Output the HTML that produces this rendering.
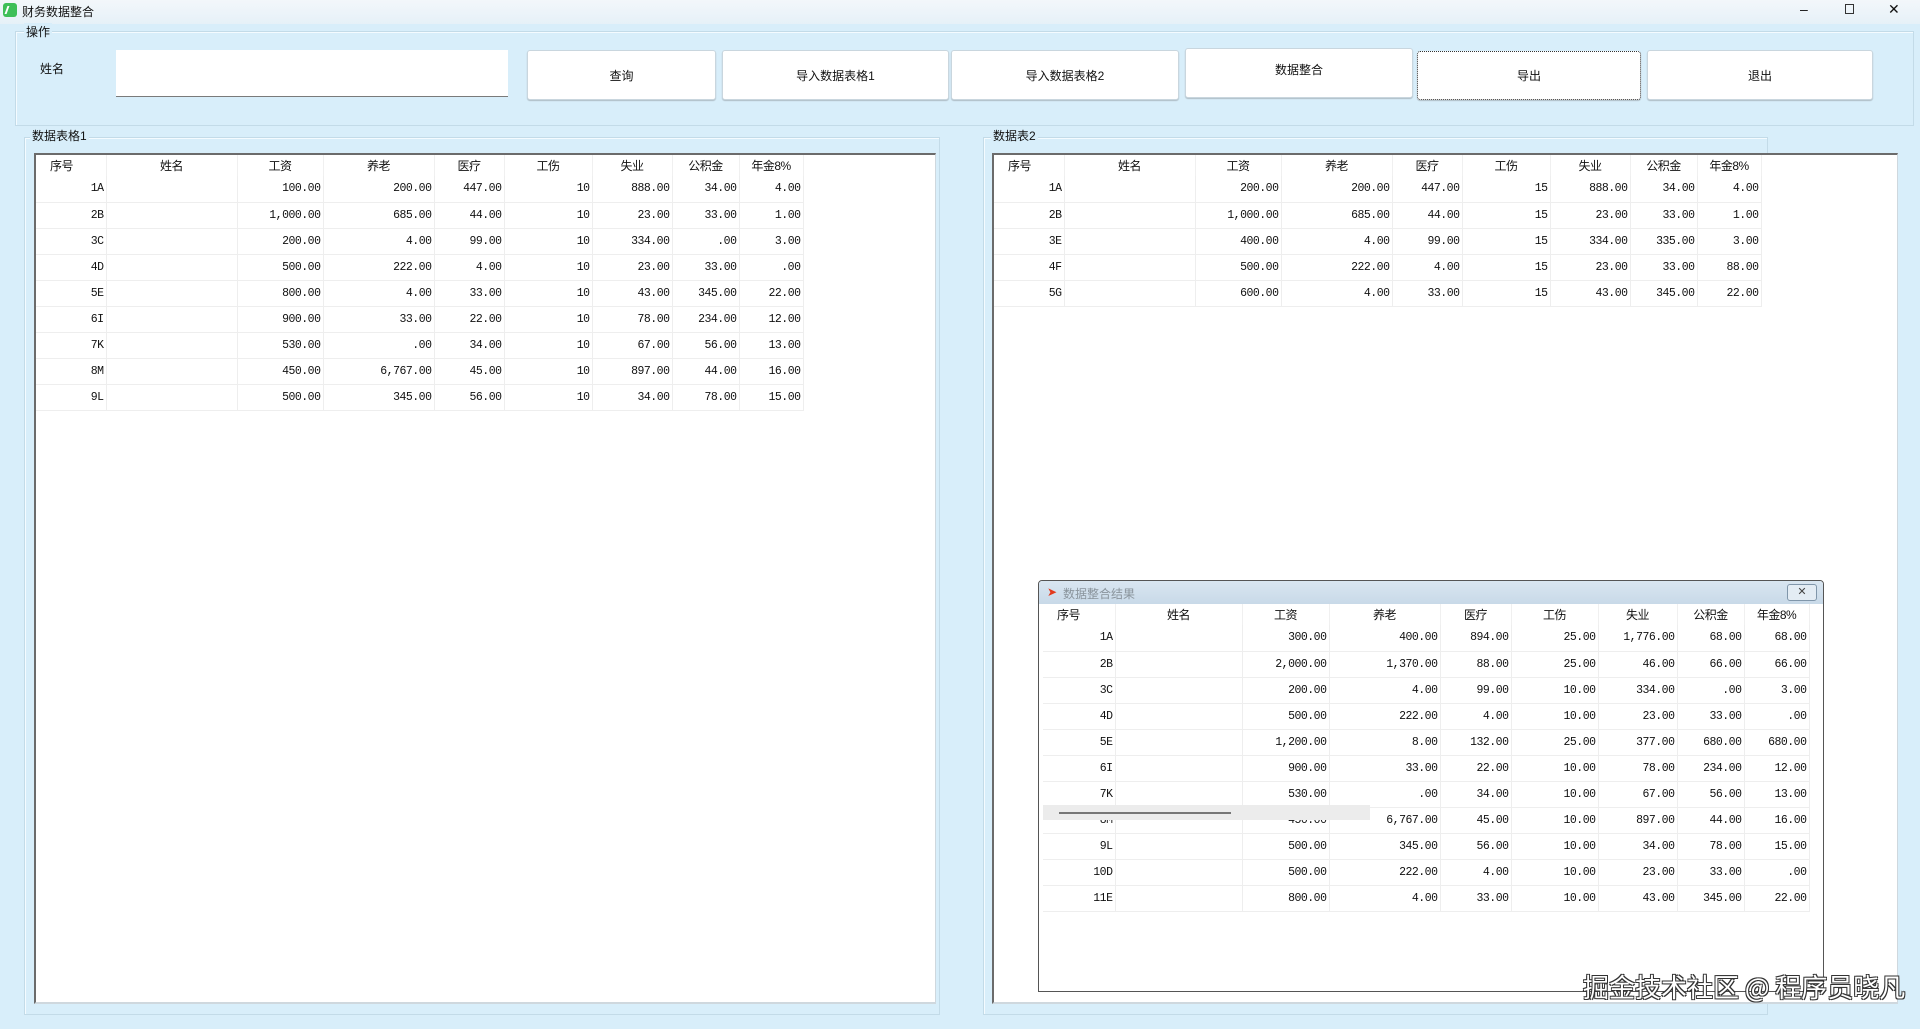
<!DOCTYPE html>
<html><head><meta charset="utf-8">
<style>
*{margin:0;padding:0;box-sizing:border-box}
body{width:1920px;height:1029px;overflow:hidden;background:#d8eefa;font-family:"Liberation Sans","Noto Sans CJK SC",sans-serif;font-size:12px;color:#111;position:relative}
.abs{position:absolute}
#title{left:0;top:0;width:1920px;height:24px;background:linear-gradient(#f3f7fa,#e6f1f8)}
.grp{position:absolute;border:1px solid #c3dbe8;box-shadow:1px 1px 0 #f4fbff inset}
.lbl{position:absolute;background:#d8eefa;padding:0 2px;font-size:12px}
.btn{position:absolute;background:#fff;border:1px solid #c9d6de;border-radius:3px;box-shadow:0 1px 1px #aebcc5;display:flex;align-items:center;justify-content:center;font-size:12px}
.tbl{position:absolute;background:#fff;border-top:2px solid #6b6b6b;border-left:2px solid #6b6b6b;border-right:1px solid #cfd8de;border-bottom:2px solid #cfd8de;overflow:hidden}
table{border-collapse:collapse;table-layout:fixed;font-family:"Liberation Mono","Noto Sans CJK SC",monospace;font-size:11.5px;letter-spacing:-0.5px}
th{font-family:"Liberation Sans","Noto Sans CJK SC",sans-serif;font-weight:normal;height:21px;font-size:12px;border-right:1px solid #f0f0f0;text-align:center}
td{height:26px;text-align:right;padding-right:2px;border-right:1px solid #eeeeee;border-bottom:1px solid #eeeeee;white-space:nowrap}
th:first-child{text-align:left;padding-left:14px}
td:nth-child(2){text-align:left}
</style></head><body>
<div id="title" class="abs"></div>
<div class="abs" style="left:3px;top:3px;width:14px;height:14px;background:#3fbf58;border-radius:3px"></div>
<div class="abs" style="left:6px;top:6px;width:8px;height:8px;border-left:2px solid #fff;transform:skewX(-20deg)"></div>
<div class="abs" style="left:22px;top:3px;font-size:12px">财务数据整合</div>
<div class="abs" style="left:1800px;top:1px;font-size:14px">–</div>
<div class="abs" style="left:1845px;top:4px;width:9px;height:10px;border:1px solid #333"></div>
<div class="abs" style="left:1888px;top:1px;font-size:14px">✕</div>

<div class="grp" style="left:15px;top:31px;width:1899px;height:95px"></div>
<div class="lbl" style="left:24px;top:23px">操作</div>
<div class="abs" style="left:40px;top:60px">姓名</div>
<div class="abs" style="left:116px;top:50px;width:392px;height:47px;background:#fff;border-bottom:1px solid #7a7a7a"></div>
<div class="btn" style="left:527px;top:50px;width:189px;height:50px">查询</div>
<div class="btn" style="left:722px;top:50px;width:227px;height:50px">导入数据表格1</div>
<div class="btn" style="left:951px;top:50px;width:228px;height:50px">导入数据表格2</div>
<div class="btn" style="left:1185px;top:48px;width:228px;height:50px;padding-bottom:8px">数据整合</div>
<div class="btn" style="left:1417px;top:51px;width:224px;height:49px;border:1px dotted #333">导出</div>
<div class="btn" style="left:1647px;top:50px;width:226px;height:50px">退出</div>

<div class="grp" style="left:24px;top:137px;width:916px;height:878px"></div>
<div class="lbl" style="left:30px;top:127px">数据表格1</div>
<div class="tbl" style="left:34px;top:153px;width:902px;height:851px">
<table style="width:767px"><colgroup><col style="width:70px"><col style="width:131px"><col style="width:86px"><col style="width:111px"><col style="width:70px"><col style="width:88px"><col style="width:80px"><col style="width:67px"><col style="width:64px"></colgroup>
<tr><th>序号</th><th>姓名</th><th>工资</th><th>养老</th><th>医疗</th><th>工伤</th><th>失业</th><th>公积金</th><th>年金8%</th></tr>
<tr><td>1A</td><td></td><td>100.00</td><td>200.00</td><td>447.00</td><td>10</td><td>888.00</td><td>34.00</td><td>4.00</td></tr>
<tr><td>2B</td><td></td><td>1,000.00</td><td>685.00</td><td>44.00</td><td>10</td><td>23.00</td><td>33.00</td><td>1.00</td></tr>
<tr><td>3C</td><td></td><td>200.00</td><td>4.00</td><td>99.00</td><td>10</td><td>334.00</td><td>.00</td><td>3.00</td></tr>
<tr><td>4D</td><td></td><td>500.00</td><td>222.00</td><td>4.00</td><td>10</td><td>23.00</td><td>33.00</td><td>.00</td></tr>
<tr><td>5E</td><td></td><td>800.00</td><td>4.00</td><td>33.00</td><td>10</td><td>43.00</td><td>345.00</td><td>22.00</td></tr>
<tr><td>6I</td><td></td><td>900.00</td><td>33.00</td><td>22.00</td><td>10</td><td>78.00</td><td>234.00</td><td>12.00</td></tr>
<tr><td>7K</td><td></td><td>530.00</td><td>.00</td><td>34.00</td><td>10</td><td>67.00</td><td>56.00</td><td>13.00</td></tr>
<tr><td>8M</td><td></td><td>450.00</td><td>6,767.00</td><td>45.00</td><td>10</td><td>897.00</td><td>44.00</td><td>16.00</td></tr>
<tr><td>9L</td><td></td><td>500.00</td><td>345.00</td><td>56.00</td><td>10</td><td>34.00</td><td>78.00</td><td>15.00</td></tr>
</table></div>

<div class="grp" style="left:983px;top:137px;width:785px;height:878px"></div>
<div class="lbl" style="left:991px;top:127px">数据表2</div>
<div class="tbl" style="left:992px;top:153px;width:906px;height:851px">
<table style="width:767px"><colgroup><col style="width:70px"><col style="width:131px"><col style="width:86px"><col style="width:111px"><col style="width:70px"><col style="width:88px"><col style="width:80px"><col style="width:67px"><col style="width:64px"></colgroup>
<tr><th>序号</th><th>姓名</th><th>工资</th><th>养老</th><th>医疗</th><th>工伤</th><th>失业</th><th>公积金</th><th>年金8%</th></tr>
<tr><td>1A</td><td></td><td>200.00</td><td>200.00</td><td>447.00</td><td>15</td><td>888.00</td><td>34.00</td><td>4.00</td></tr>
<tr><td>2B</td><td></td><td>1,000.00</td><td>685.00</td><td>44.00</td><td>15</td><td>23.00</td><td>33.00</td><td>1.00</td></tr>
<tr><td>3E</td><td></td><td>400.00</td><td>4.00</td><td>99.00</td><td>15</td><td>334.00</td><td>335.00</td><td>3.00</td></tr>
<tr><td>4F</td><td></td><td>500.00</td><td>222.00</td><td>4.00</td><td>15</td><td>23.00</td><td>33.00</td><td>88.00</td></tr>
<tr><td>5G</td><td></td><td>600.00</td><td>4.00</td><td>33.00</td><td>15</td><td>43.00</td><td>345.00</td><td>22.00</td></tr>
</table></div>

<div class="abs" style="left:1038px;top:580px;width:786px;height:412px;background:#fff;border:1px solid #555;border-radius:4px 4px 0 0;overflow:hidden">
<div class="abs" style="left:0;top:0;width:786px;height:23px;background:linear-gradient(#d9e6f1,#c8d9e8)"></div>
<div class="abs" style="left:8px;top:4px;color:#e23a1e;font-size:12px">➤</div>
<div class="abs" style="left:24px;top:4px;color:#8a949c;font-size:12px">数据整合结果</div>
<div class="abs" style="left:748px;top:3px;width:30px;height:17px;border:1px solid #8096aa;border-radius:3px;background:#e3ecf4;font-size:11px;text-align:center;line-height:15px;color:#444">✕</div>
<div class="abs" style="left:4px;top:23px">
<table style="width:766px"><colgroup><col style="width:72px"><col style="width:127px"><col style="width:87px"><col style="width:111px"><col style="width:71px"><col style="width:87px"><col style="width:79px"><col style="width:67px"><col style="width:65px"></colgroup>
<tr><th>序号</th><th>姓名</th><th>工资</th><th>养老</th><th>医疗</th><th>工伤</th><th>失业</th><th>公积金</th><th>年金8%</th></tr>
<tr><td>1A</td><td></td><td>300.00</td><td>400.00</td><td>894.00</td><td>25.00</td><td>1,776.00</td><td>68.00</td><td>68.00</td></tr>
<tr><td>2B</td><td></td><td>2,000.00</td><td>1,370.00</td><td>88.00</td><td>25.00</td><td>46.00</td><td>66.00</td><td>66.00</td></tr>
<tr><td>3C</td><td></td><td>200.00</td><td>4.00</td><td>99.00</td><td>10.00</td><td>334.00</td><td>.00</td><td>3.00</td></tr>
<tr><td>4D</td><td></td><td>500.00</td><td>222.00</td><td>4.00</td><td>10.00</td><td>23.00</td><td>33.00</td><td>.00</td></tr>
<tr><td>5E</td><td></td><td>1,200.00</td><td>8.00</td><td>132.00</td><td>25.00</td><td>377.00</td><td>680.00</td><td>680.00</td></tr>
<tr><td>6I</td><td></td><td>900.00</td><td>33.00</td><td>22.00</td><td>10.00</td><td>78.00</td><td>234.00</td><td>12.00</td></tr>
<tr><td>7K</td><td></td><td>530.00</td><td>.00</td><td>34.00</td><td>10.00</td><td>67.00</td><td>56.00</td><td>13.00</td></tr>
<tr><td>8M</td><td></td><td>450.00</td><td>6,767.00</td><td>45.00</td><td>10.00</td><td>897.00</td><td>44.00</td><td>16.00</td></tr>
<tr><td>9L</td><td></td><td>500.00</td><td>345.00</td><td>56.00</td><td>10.00</td><td>34.00</td><td>78.00</td><td>15.00</td></tr>
<tr><td>10D</td><td></td><td>500.00</td><td>222.00</td><td>4.00</td><td>10.00</td><td>23.00</td><td>33.00</td><td>.00</td></tr>
<tr><td>11E</td><td></td><td>800.00</td><td>4.00</td><td>33.00</td><td>10.00</td><td>43.00</td><td>345.00</td><td>22.00</td></tr>
</table></div>
<div class="abs" style="left:4px;top:224px;width:327px;height:15px;background:#ececec"></div>
<div class="abs" style="left:20px;top:231px;width:172px;height:2px;background:#777"></div>
</div>

<div class="abs" style="left:1583px;top:968px;font-size:26px;color:#fff;font-family:'Noto Sans CJK SC',sans-serif;text-shadow:1px 1px 0 #333,-1px -1px 0 #333,1px -1px 0 #333,-1px 1px 0 #333;letter-spacing:0px">掘金技术社区 @ 程序员晓凡</div>
</body></html>
